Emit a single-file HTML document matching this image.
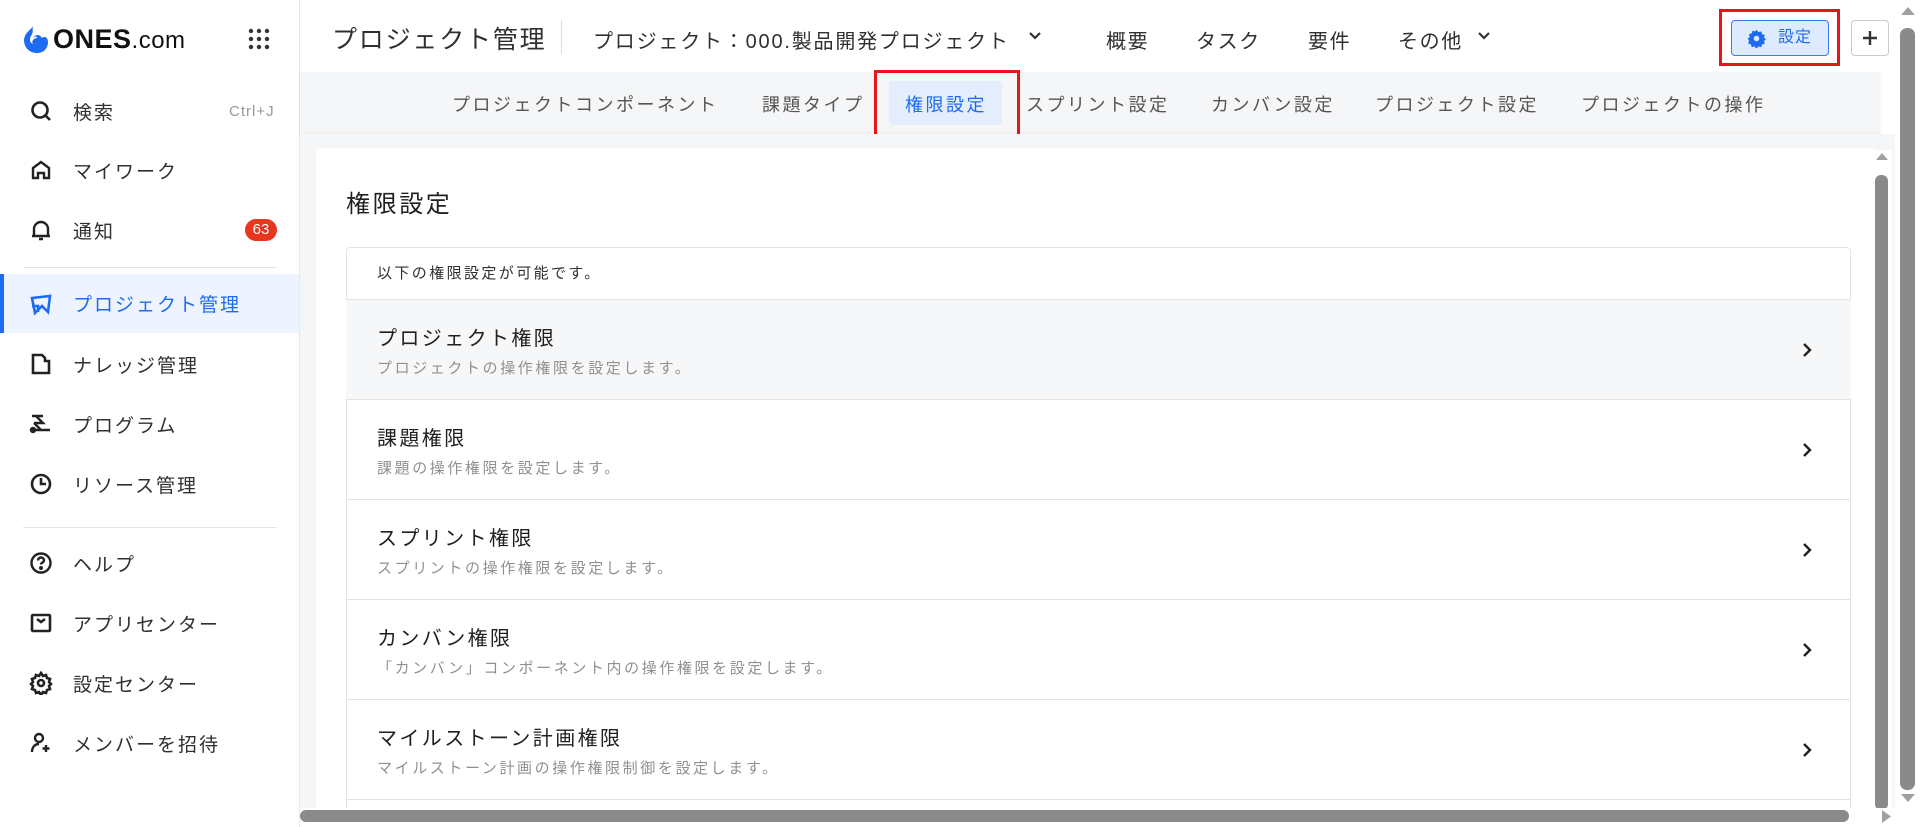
<!DOCTYPE html>
<html><head><meta charset="utf-8"><style>
*{box-sizing:border-box;margin:0;padding:0}
body{width:1920px;height:827px;overflow:hidden;background:#fff;font-family:"Liberation Sans","Noto Sans CJK JP",sans-serif;color:#303030;position:relative}
.abs{position:absolute}
#side{left:0;top:0;width:300px;height:827px;border-right:1px solid #e8e8e8;background:#fff}
.it{position:absolute;left:0;width:299px;height:56px;display:flex;align-items:center;font-size:19px;color:#303030;letter-spacing:2px}
.it svg{position:absolute;left:29px;width:24px;height:24px}
.it span{position:absolute;left:73px}
.div{position:absolute;left:23px;width:254px;height:1px;background:#e5e5e5}
.tn{position:absolute;top:25px;font-size:20px;color:#303030;letter-spacing:1.6px}
.sn{position:absolute;top:91px;font-size:18px;color:#555;letter-spacing:2.5px}
.row{position:absolute;left:346px;width:1505px;border-top:1px solid #e3e3e3}
.row .t{position:absolute;left:31px;top:22px;font-size:20px;color:#202020;letter-spacing:2.4px}
.row .d{position:absolute;left:31px;top:57px;font-size:15px;color:#909090;letter-spacing:2.6px}
.row svg{position:absolute;left:1455px;top:42px}
</style></head><body>
<div id="side" class="abs">
  <svg class="abs" style="left:20px;top:24px" width="30" height="32" viewBox="0 0 30 32"><path d="M13 2c-2 4-8 6-9 14 0 8 6 13 13 13 7 0 11-5 11-11 0-5-4-6-6-4-2-4-7-4-9 0 2-2 4-2 4 0-3 0-6 3-4 6-3-1-4-5-2-8 3-4 1-7 2-10z" fill="#1d6bf2"/></svg>
  <div class="abs" style="left:53px;top:24px;font-size:27px;font-weight:bold;letter-spacing:0.5px;color:#111">ONES<span style="font-weight:normal;font-size:24px">.com</span></div>
  <svg class="abs" style="left:248px;top:28px" width="22" height="22" viewBox="0 0 22 22" fill="#333"><circle cx="3" cy="3" r="2.2"/><circle cx="11" cy="3" r="2.2"/><circle cx="19" cy="3" r="2.2"/><circle cx="3" cy="11" r="2.2"/><circle cx="11" cy="11" r="2.2"/><circle cx="19" cy="11" r="2.2"/><circle cx="3" cy="19" r="2.2"/><circle cx="11" cy="19" r="2.2"/><circle cx="19" cy="19" r="2.2"/></svg>

  <div class="it" style="top:83px"><svg viewBox="0 0 24 24" fill="none" stroke="#222" stroke-width="2.6"><circle cx="11" cy="11" r="7.5"/><path d="M17 17l4 4"/></svg><span>検索</span><span style="left:229px;font-size:15px;color:#999;letter-spacing:1px">Ctrl+J</span></div>
  <div class="it" style="top:142px"><svg viewBox="0 0 24 24" fill="none" stroke="#222" stroke-width="2.4"><path d="M4 20V10l8-6 8 6v10h-5v-5h-6v5z"/></svg><span>マイワーク</span></div>
  <div class="it" style="top:202px"><svg viewBox="0 0 24 24" fill="none" stroke="#222" stroke-width="2.4"><path d="M5 18V11a7 7 0 0114 0v7zM3 18h18M10 21h4"/></svg><span>通知</span><span style="left:245px;top:17px;width:32px;height:22px;border-radius:11px;background:#e8361f;color:#fff;font-size:15px;text-align:center;line-height:22px;letter-spacing:0">63</span></div>
  <div class="div" style="top:267px"></div>
  <div class="it" style="top:274px;height:59px;background:#edf4ff;color:#1d6bf2;border-left:4px solid #1d6bf2"><svg style="left:25px" viewBox="0 0 24 24" fill="none" stroke="#1d6bf2" stroke-width="2.6"><path d="M3 6l18-2-2 16-6-6-7 7zM3 14h6v6"/></svg><span style="left:69px">プロジェクト管理</span></div>
  <div class="it" style="top:336px"><svg viewBox="0 0 24 24" fill="none" stroke="#222" stroke-width="2.6"><path d="M4 3h9l3 3v3h4v12H4z"/></svg><span>ナレッジ管理</span></div>
  <div class="it" style="top:396px"><svg viewBox="0 0 24 24" fill="none" stroke="#222" stroke-width="2.4"><path d="M3 4h11M7 4l7 7H5M5 11l7 7M3 18h18"/><circle cx="4" cy="18" r="2" fill="#222"/></svg><span>プログラム</span></div>
  <div class="it" style="top:456px"><svg viewBox="0 0 24 24" fill="none" stroke="#222" stroke-width="2.6"><circle cx="12" cy="12" r="9"/><path d="M12 6v6h5"/></svg><span>リソース管理</span></div>
  <div class="div" style="top:527px"></div>
  <div class="it" style="top:535px"><svg viewBox="0 0 24 24" fill="none" stroke="#222" stroke-width="2.4"><circle cx="12" cy="12" r="9.5"/><path d="M9 9.5a3 3 0 116 0c0 2-3 2-3 4"/><circle cx="12" cy="17" r="0.8" fill="#222"/></svg><span>ヘルプ</span></div>
  <div class="it" style="top:595px"><svg viewBox="0 0 24 24" fill="none" stroke="#222" stroke-width="2.6"><rect x="3" y="4" width="18" height="16" rx="1"/><path d="M8 8l4 3 4-3"/></svg><span>アプリセンター</span></div>
  <div class="it" style="top:655px"><svg viewBox="0 0 24 24" fill="none" stroke="#222" stroke-width="2.6"><circle cx="12" cy="12" r="3"/><path d="M12 2l2 3 3-1 1 3 3 1-1 3 2 2-2 2 1 3-3 1-1 3-3-1-2 3-2-3-3 1-1-3-3-1 1-3-2-2 2-2-1-3 3-1 1-3 3 1z"/></svg><span>設定センター</span></div>
  <div class="it" style="top:715px"><svg viewBox="0 0 24 24" fill="none" stroke="#222" stroke-width="2.4"><circle cx="10" cy="7" r="4"/><path d="M3 21c0-5 3-8 7-8M17 14v7M13.5 17.5h7"/></svg><span>メンバーを招待</span></div>
</div>

<!-- top bar -->
<div class="abs" style="left:332px;top:20px;font-size:25px;color:#303030;letter-spacing:1.8px">プロジェクト管理</div>
<div class="abs" style="left:561px;top:20px;width:1px;height:34px;background:#ddd"></div>
<div class="tn" style="left:593px;letter-spacing:1.8px">プロジェクト：000.製品開発プロジェクト</div>
<svg class="abs" style="left:1028px;top:31px" width="14" height="10" viewBox="0 0 14 10"><path d="M2 2l5 5 5-5" fill="none" stroke="#333" stroke-width="2.2"/></svg>
<div class="tn" style="left:1106px">概要</div>
<div class="tn" style="left:1196px">タスク</div>
<div class="tn" style="left:1308px">要件</div>
<div class="tn" style="left:1398px">その他</div>
<svg class="abs" style="left:1477px;top:31px" width="14" height="10" viewBox="0 0 14 10"><path d="M2 2l5 5 5-5" fill="none" stroke="#333" stroke-width="2.2"/></svg>
<div class="abs" style="left:1731px;top:20px;width:98px;height:36px;border:1.5px solid #3b7cf0;border-radius:4px;background:#deebff;color:#1d6bf2;font-size:16px;line-height:33px;padding-left:46px;letter-spacing:1px">設定</div>
<svg class="abs" style="left:1747px;top:29px" width="19" height="19" viewBox="0 0 24 24"><path d="M12 1l2.5 3 3.5-1 1 3.5 3.5 1-1 3.5 2.5 2-2.5 2 1 3.5-3.5 1-1 3.5-3.5-1-2.5 3-2.5-3-3.5 1-1-3.5-3.5-1 1-3.5L1 12l2.5-2-1-3.5 3.5-1 1-3.5 3.5 1z" fill="#1d6bf2"/><circle cx="12" cy="12" r="3.5" fill="#deebff"/></svg>
<div class="abs" style="left:1719px;top:9px;width:121px;height:57px;border:3px solid #e8141c"></div>
<div class="abs" style="left:1851px;top:20px;width:38px;height:36px;border:1px solid #ccc;border-radius:4px"></div>
<svg class="abs" style="left:1861px;top:29px" width="18" height="18" viewBox="0 0 18 18"><path d="M9 2v14M2 9h14" stroke="#333" stroke-width="2.4"/></svg>

<!-- subnav -->
<div class="abs" style="left:300px;top:72px;width:1580px;height:60px;background:#f5f6f8;box-shadow:0 2px 3px rgba(0,0,0,0.08)"></div>
<div class="sn" style="left:452px">プロジェクトコンポーネント</div>
<div class="sn" style="left:762px">課題タイプ</div>
<div class="abs" style="left:889px;top:81px;width:113px;height:44px;background:#e3edfc;border-radius:4px"></div>
<div class="sn" style="left:905px;color:#1d6bf2">権限設定</div>
<div class="sn" style="left:1026px">スプリント設定</div>
<div class="sn" style="left:1211px">カンバン設定</div>
<div class="sn" style="left:1375px">プロジェクト設定</div>
<div class="sn" style="left:1581px">プロジェクトの操作</div>
<div class="abs" style="left:874px;top:70px;width:146px;height:70px;border:3px solid #e8141c"></div>

<!-- content -->
<div class="abs" style="left:300px;top:134px;width:1595px;height:693px;background:#f5f6f8"></div>
<div class="abs" style="left:316px;top:148px;width:1560px;height:679px;background:#fff;border-radius:4px"></div>
<div class="abs" style="left:346px;top:184px;font-size:24px;color:#202020;letter-spacing:2.6px">権限設定</div>
<div class="abs" style="left:346px;top:247px;width:1505px;height:580px;border:1px solid #e3e3e3;border-radius:4px 4px 0 0"></div>
<div class="abs" style="left:377px;top:262px;font-size:15px;color:#303030;letter-spacing:2.4px">以下の権限設定が可能です。</div>
<div class="row" style="top:299px;height:101px;background:#f6f7f9"><div class="t">プロジェクト権限</div><div class="d">プロジェクトの操作権限を設定します。</div><svg width="12" height="16" viewBox="0 0 12 16"><path d="M3 2l6 6-6 6" fill="none" stroke="#222" stroke-width="2.4"/></svg></div>
<div class="row" style="top:399px;height:101px"><div class="t">課題権限</div><div class="d">課題の操作権限を設定します。</div><svg width="12" height="16" viewBox="0 0 12 16"><path d="M3 2l6 6-6 6" fill="none" stroke="#222" stroke-width="2.4"/></svg></div>
<div class="row" style="top:499px;height:101px"><div class="t">スプリント権限</div><div class="d">スプリントの操作権限を設定します。</div><svg width="12" height="16" viewBox="0 0 12 16"><path d="M3 2l6 6-6 6" fill="none" stroke="#222" stroke-width="2.4"/></svg></div>
<div class="row" style="top:599px;height:101px"><div class="t">カンバン権限</div><div class="d">「カンバン」コンポーネント内の操作権限を設定します。</div><svg width="12" height="16" viewBox="0 0 12 16"><path d="M3 2l6 6-6 6" fill="none" stroke="#222" stroke-width="2.4"/></svg></div>
<div class="row" style="top:699px;height:101px"><div class="t">マイルストーン計画権限</div><div class="d">マイルストーン計画の操作権限制御を設定します。</div><svg width="12" height="16" viewBox="0 0 12 16"><path d="M3 2l6 6-6 6" fill="none" stroke="#222" stroke-width="2.4"/></svg></div>
<div class="row" style="top:799px;height:28px"></div>

<!-- inner scrollbar -->
<div class="abs" style="left:1872px;top:150px;width:20px;height:660px;background:#fff"></div>
<svg class="abs" style="left:1876px;top:152px" width="12" height="8"><path d="M0 8L6 1 12 8z" fill="#a0a0a0"/></svg>
<div class="abs" style="left:1875px;top:175px;width:13px;height:635px;background:#8a8a8a;border-radius:6px"></div>
<!-- bottom scrollbar -->
<div class="abs" style="left:300px;top:808px;width:1595px;height:19px;background:#fff"></div>
<div class="abs" style="left:300px;top:810px;width:1549px;height:12px;background:#8a8a8a;border-radius:6px"></div>
<svg class="abs" style="left:1882px;top:810px" width="10" height="13"><path d="M0 0L9 6.5 0 13z" fill="#a0a0a0"/></svg>
<!-- outer scrollbar -->
<div class="abs" style="left:1896px;top:0;width:24px;height:827px;background:#fff"></div>
<svg class="abs" style="left:1901px;top:6px" width="14" height="9"><path d="M0 9L7 1 14 9z" fill="#a0a0a0"/></svg>
<div class="abs" style="left:1900px;top:28px;width:15px;height:762px;background:#8a8a8a;border-radius:7px"></div>
<svg class="abs" style="left:1901px;top:794px" width="14" height="9"><path d="M0 0L7 8 14 0z" fill="#a0a0a0"/></svg>
</body></html>
